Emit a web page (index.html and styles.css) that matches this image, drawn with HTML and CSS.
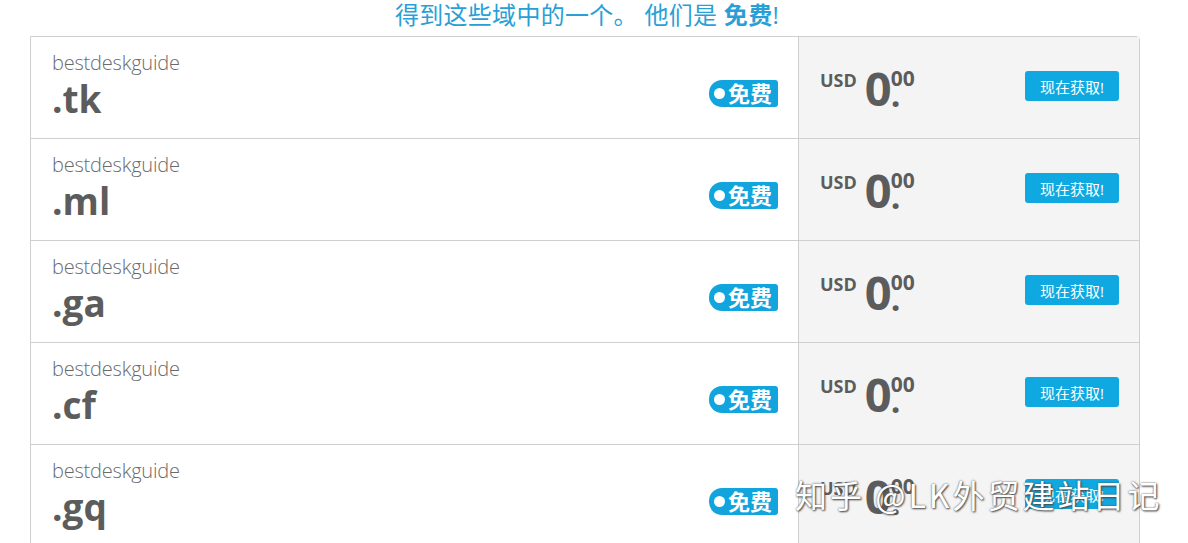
FILE: index.html
```html
<!DOCTYPE html>
<html lang="zh-CN">
<head>
    <meta charset="UTF-8">
    <meta name="viewport" content="width=device-width, initial-scale=1.0">
    <title>免费域名</title>
    <link rel="stylesheet" href="styles.css">
</head>
<body>
    <h2 class="intro">得到这些域中的一个。 他们是 <strong>免费</strong>!</h2>

    <div class="domains">
        <div class="row">
            <div class="name">
                <div class="sld">bestdeskguide</div>
                <div class="tld">.tk</div>
                <span class="badge"><i></i>免费</span>
            </div>
            <div class="offer">
                <div class="price"><span class="cur">USD</span><span class="int">0</span><span class="cents"><span class="sup">00</span><span class="dot">.</span></span></div>
                <button class="get">现在获取!</button>
            </div>
        </div>
        <div class="row">
            <div class="name">
                <div class="sld">bestdeskguide</div>
                <div class="tld">.ml</div>
                <span class="badge"><i></i>免费</span>
            </div>
            <div class="offer">
                <div class="price"><span class="cur">USD</span><span class="int">0</span><span class="cents"><span class="sup">00</span><span class="dot">.</span></span></div>
                <button class="get">现在获取!</button>
            </div>
        </div>
        <div class="row">
            <div class="name">
                <div class="sld">bestdeskguide</div>
                <div class="tld">.ga</div>
                <span class="badge"><i></i>免费</span>
            </div>
            <div class="offer">
                <div class="price"><span class="cur">USD</span><span class="int">0</span><span class="cents"><span class="sup">00</span><span class="dot">.</span></span></div>
                <button class="get">现在获取!</button>
            </div>
        </div>
        <div class="row">
            <div class="name">
                <div class="sld">bestdeskguide</div>
                <div class="tld">.cf</div>
                <span class="badge"><i></i>免费</span>
            </div>
            <div class="offer">
                <div class="price"><span class="cur">USD</span><span class="int">0</span><span class="cents"><span class="sup">00</span><span class="dot">.</span></span></div>
                <button class="get">现在获取!</button>
            </div>
        </div>
        <div class="row">
            <div class="name">
                <div class="sld">bestdeskguide</div>
                <div class="tld">.gq</div>
                <span class="badge"><i></i>免费</span>
            </div>
            <div class="offer">
                <div class="price"><span class="cur">USD</span><span class="int">0</span><span class="cents"><span class="sup">00</span><span class="dot">.</span></span></div>
                <button class="get">现在获取!</button>
            </div>
        </div>
    </div>

    <div class="watermark">知乎 @LK外贸建站日记</div>
</body>
</html>
```

FILE: styles.css
```css
body {
    margin: 0;
    height: 543px;
    overflow: hidden;
    background: #fff;
    font-family: "Open Sans", "Noto Sans CJK SC", sans-serif;
    color: #5f5f5f;
    position: relative;
}
.intro {
    margin: 0;
    height: 36px;
    line-height: 30px;
    text-align: center;
    font-size: 24px;
    font-weight: 400;
    letter-spacing: 0.3px;
    color: #2a9fd6;
    padding-right: 14px;
}
.intro strong {
    font-weight: 700;
}
.domains {
    margin: 0 48px 0 30px;
    border: 1px solid #cfcfcf;
    border-radius: 0 4px 0 0;
}
.row {
    display: flex;
    height: 101px;
    border-top: 1px solid #cfcfcf;
}
.row:first-child {
    border-top: none;
}
.name {
    flex: 0 0 768px;
    position: relative;
    padding: 14px 0 0 21px;
    box-sizing: border-box;
    border-right: 1px solid #cfcfcf;
}
.sld {
    font-size: 20px;
    font-weight: 300;
    line-height: 24px;
    letter-spacing: -0.2px;
    color: #6a6a6a;
}
.tld {
    margin-top: 6px;
    font-size: 37px;
    font-weight: 700;
    line-height: 36px;
    color: #5c5c5c;
}
.badge {
    position: absolute;
    right: 20px;
    top: 43px;
    display: flex;
    align-items: center;
    height: 27px;
    padding: 0 6px 0 5px;
    background: #12a4dd;
    border-radius: 13px 3px 3px 13px;
    color: #fff;
    font-size: 22px;
    font-weight: 700;
    line-height: 27px;
}
.badge i {
    width: 11px;
    height: 11px;
    margin-right: 3px;
    border-radius: 50%;
    background: #fff;
}
.offer {
    flex: 1;
    display: flex;
    justify-content: space-between;
    align-items: flex-start;
    padding: 35px 20px 0 21px;
    background: #f4f4f4;
}
.price {
    display: flex;
    align-items: flex-start;
}
.cur {
    font-size: 18px;
    font-weight: 700;
    line-height: 16px;
    margin-right: 8px;
    color: #5c5c5c;
}
.int {
    font-size: 47px;
    font-weight: 700;
    line-height: 40px;
    margin-top: -4px;
    letter-spacing: -2px;
    color: #5c5c5c;
}
.cents {
    display: flex;
    flex-direction: column;
    margin-left: 1px;
}
.sup {
    font-size: 21px;
    font-weight: 700;
    line-height: 18px;
    margin-top: -3px;
    color: #5c5c5c;
}
.dot {
    font-size: 34px;
    font-weight: 700;
    line-height: 14px;
    color: #5c5c5c;
}
.get {
    margin-top: -1px;
    height: 30px;
    padding: 0 15px;
    border: none;
    border-radius: 3px;
    background: #0fa8e0;
    color: #fff;
    font-family: "Open Sans", "Noto Sans CJK SC", sans-serif;
    font-size: 15px;
    cursor: pointer;
}
.watermark {
    position: absolute;
    left: 795px;
    top: 474px;
    font-family: "Noto Sans CJK SC", sans-serif;
    font-size: 32px;
    line-height: 40px;
    letter-spacing: 3px;
    color: #fff;
    text-shadow: 0 0 2px #555, 1px 1px 2px #444;
}
```
